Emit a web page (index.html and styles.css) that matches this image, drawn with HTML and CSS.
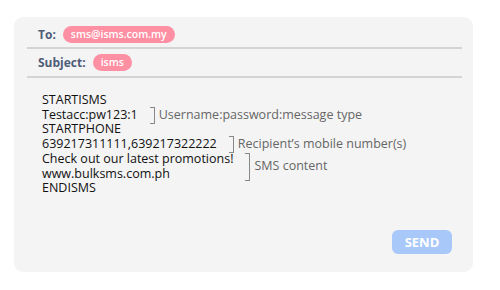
FILE: index.html
```html
<!DOCTYPE html>
<html lang="en">
<head>
  <meta charset="UTF-8">
  <title>Bulk SMS Email Format</title>
  <link rel="stylesheet" href="styles.css">
</head>
<body>

  <div class="mail-card">
    <div class="field field-to">
      <span class="field-label">To:</span>
      <span class="pill">sms@isms.com.my</span>
    </div>
    <div class="field field-subject">
      <span class="field-label">Subject:</span>
      <span class="pill">isms</span>
    </div>

    <div class="message">
      <div class="line">STARTISMS</div>
      <div class="row">
        <div class="line">Testacc:pw123:1</div>
        <div class="note"><span class="bracket"></span>Username:password:message type</div>
      </div>
      <div class="line">STARTPHONE</div>
      <div class="row">
        <div class="line">639217311111,639217322222</div>
        <div class="note"><span class="bracket"></span>Recipient’s mobile number(s)</div>
      </div>
      <div class="row">
        <div>
          <div class="line">Check out our latest promotions!</div>
          <div class="line">www.bulksms.com.ph</div>
        </div>
        <div class="note note-tall"><span class="bracket"></span>SMS content</div>
      </div>
      <div class="line">ENDISMS</div>
    </div>

    <div class="actions">
      <button class="send-btn">SEND</button>
    </div>
  </div>

</body>
</html>
```

FILE: styles.css
```css
body {
  margin: 0;
  padding: 17px 0 0 14px;
  background: #fff;
  font-family: 'Open Sans', sans-serif;
}

.mail-card {
  width: 459px;
  height: 255px;
  box-sizing: border-box;
  padding: 0 11px 0 13px;
  background: #f4f4f4;
  border-radius: 9px;
  display: flex;
  flex-direction: column;
}

.field {
  display: flex;
  align-items: center;
  padding-left: 11px;
  border-bottom: 2px solid #d4d4d4;
}

.field-to {
  padding-top: 9px;
  padding-bottom: 4px;
}

.field-subject {
  padding-top: 5px;
  padding-bottom: 5px;
}

.field-label {
  font-size: 12px;
  font-weight: bold;
  color: #4e5c78;
  margin-right: 7px;
}

.pill {
  height: 17px;
  line-height: 17px;
  padding: 0 8px;
  border-radius: 9px;
  background: #ff8fa2;
  color: #fff;
  font-size: 10.5px;
  font-weight: 600;
}

.message {
  padding: 15px 0 0 15px;
  font-size: 12.5px;
  line-height: 14.7px;
  color: #111;
}

.row {
  display: flex;
  align-items: center;
  gap: 12px;
}

.note {
  display: flex;
  align-items: center;
  height: 14.7px;
  color: #666;
}

.bracket {
  width: 4px;
  height: 15px;
  margin-right: 4px;
  border: 1px solid #888;
  border-left: none;
}

.note-tall .bracket {
  height: 26px;
}

.actions {
  margin-top: auto;
  padding: 0 10px 18px 0;
  display: flex;
  justify-content: flex-end;
}

.send-btn {
  width: 60px;
  height: 24px;
  border: none;
  border-radius: 6px;
  background: #a9c8fa;
  color: #fff;
  font-family: 'Open Sans', sans-serif;
  font-size: 13px;
  font-weight: bold;
  cursor: pointer;
}
```
